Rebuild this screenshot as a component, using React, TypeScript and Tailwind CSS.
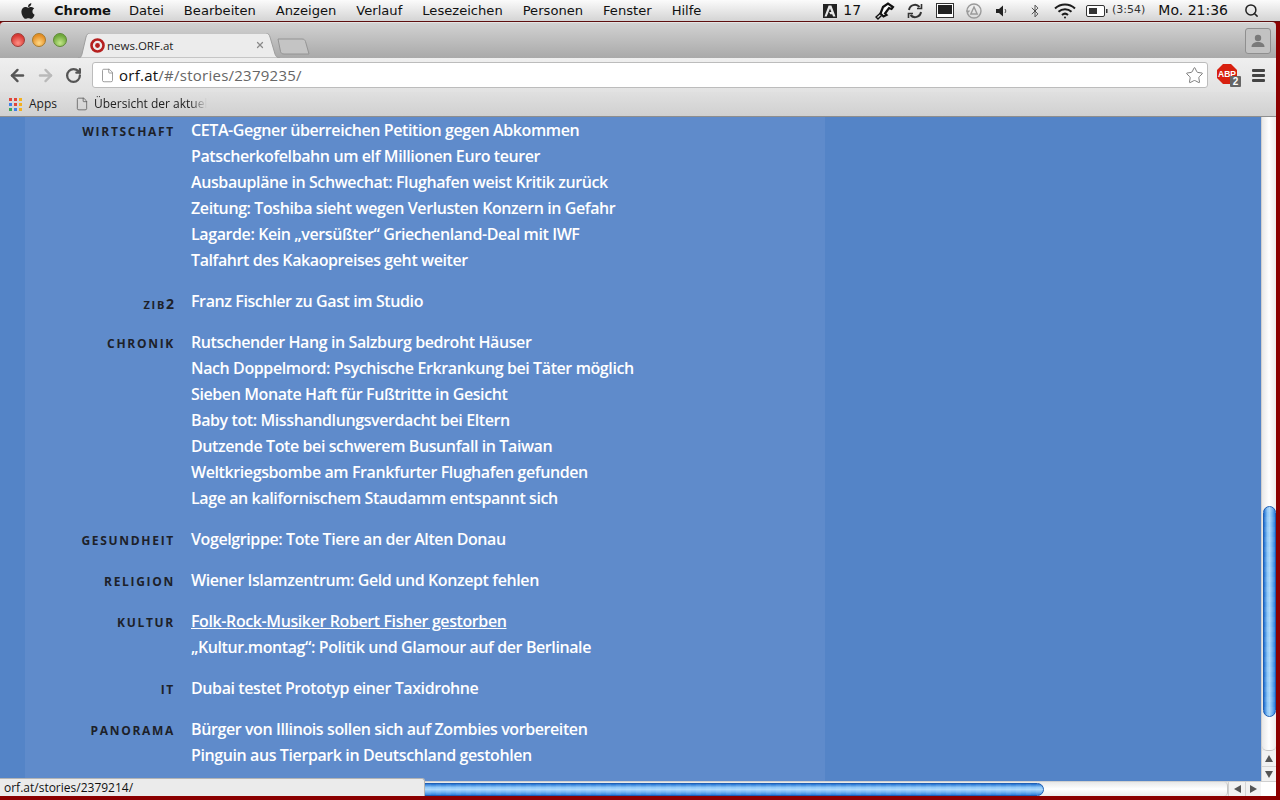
import { ArrowLeft, ArrowRight, Bluetooth, File, RotateCw, Search, Star, X } from 'lucide-react'
import { FaApple } from 'react-icons/fa'

interface NewsGroup {
  label: string
  items: string[]
}

const groups: NewsGroup[] = [
  {
    label: 'WIRTSCHAFT',
    items: [
      'CETA-Gegner überreichen Petition gegen Abkommen',
      'Patscherkofelbahn um elf Millionen Euro teurer',
      'Ausbaupläne in Schwechat: Flughafen weist Kritik zurück',
      'Zeitung: Toshiba sieht wegen Verlusten Konzern in Gefahr',
      'Lagarde: Kein „versüßter“ Griechenland-Deal mit IWF',
      'Talfahrt des Kakaopreises geht weiter',
    ],
  },
  { label: 'ZIB2', items: ['Franz Fischler zu Gast im Studio'] },
  {
    label: 'CHRONIK',
    items: [
      'Rutschender Hang in Salzburg bedroht Häuser',
      'Nach Doppelmord: Psychische Erkrankung bei Täter möglich',
      'Sieben Monate Haft für Fußtritte in Gesicht',
      'Baby tot: Misshandlungsverdacht bei Eltern',
      'Dutzende Tote bei schwerem Busunfall in Taiwan',
      'Weltkriegsbombe am Frankfurter Flughafen gefunden',
      'Lage an kalifornischem Staudamm entspannt sich',
    ],
  },
  { label: 'GESUNDHEIT', items: ['Vogelgrippe: Tote Tiere an der Alten Donau'] },
  { label: 'RELIGION', items: ['Wiener Islamzentrum: Geld und Konzept fehlen'] },
  {
    label: 'KULTUR',
    items: ['Folk-Rock-Musiker Robert Fisher gestorben', '„Kultur.montag“: Politik und Glamour auf der Berlinale'],
  },
  { label: 'IT', items: ['Dubai testet Prototyp einer Taxidrohne'] },
  {
    label: 'PANORAMA',
    items: ['Bürger von Illinois sollen sich auf Zombies vorbereiten', 'Pinguin aus Tierpark in Deutschland gestohlen'],
  },
]

const menuItems = ['Datei', 'Bearbeiten', 'Anzeigen', 'Verlauf', 'Lesezeichen', 'Personen', 'Fenster', 'Hilfe']

const appsColors = [
  'bg-[#e0453a]', 'bg-[#e0453a]', 'bg-[#f2b01e]',
  'bg-[#3f7fe6]', 'bg-[#e0453a]', 'bg-[#f2b01e]',
  'bg-[#3aa757]', 'bg-[#3f7fe6]', 'bg-[#f2b01e]',
]

function MenuBar() {
  return (
    <div className="flex h-[22px] items-center border-b border-[#5e0f0f] bg-gradient-to-b from-[#fbfbfb] to-[#d4d4d4] font-['DejaVu_Sans',sans-serif] text-[13.1px] text-[#111]">
      <FaApple className="ml-[19px] text-[18px] text-[#222]" />
      <span className="ml-[17px] mr-[18px] font-bold">Chrome</span>
      <div className="flex gap-[20px]">
        {menuItems.map((m) => (
          <span key={m}>{m}</span>
        ))}
      </div>
      <div className="ml-auto flex items-center">
        <svg width="14" height="14" viewBox="0 0 14 14">
          <rect width="14" height="14" fill="#222" />
          <path d="M5.600 1.500 1.500 12.500h2.200L7 4.500 8.400 8H6.200l1 2.200h2l.9 2.300h2.400L8.400 1.500z" fill="#e8e8e8" />
        </svg>
        <span className="ml-[6px] text-[14px]">17</span>
        <svg className="ml-[14px]" width="20" height="18" viewBox="0 0 20 18" fill="none" stroke="#111" strokeWidth="2.200">
          <path d="M8 5 13 1.500l5 3.500-1.500 2-2.500-1-4 5.500 1.500 1.500-3 1.500-3-3z" fill="#fff" />
          <path d="M5.500 11 1 15l2 2 3.500-3.500" strokeWidth="1.400" />
        </svg>
        <svg className="ml-[12px]" width="16" height="16" viewBox="0 0 16 16" fill="none" stroke="#333" strokeWidth="2">
          <path d="M2 7a6 6 0 0 1 10.500-3" />
          <path d="M14 9a6 6 0 0 1-10.500 3" />
          <path d="M14.500 1v4.500H10" strokeWidth="1.600" />
          <path d="M1.500 15v-4.500H6" strokeWidth="1.600" />
        </svg>
        <svg className="ml-[13px]" width="18" height="15" viewBox="0 0 18 15">
          <rect x="0.500" y="0.500" width="17" height="14" fill="#fff" stroke="#333" />
          <rect x="2" y="2" width="14" height="9" fill="#222" />
        </svg>
        <svg className="ml-[12px]" width="16" height="16" viewBox="0 0 16 16" fill="none" stroke="#9a9a9a" strokeWidth="1.400">
          <circle cx="8" cy="8" r="7" />
          <path d="M8 4 4.800 11h6.400z" />
          <path d="M0.500 7.500 2 9l1.500-1.500" />
        </svg>
        <svg className="ml-[14px]" width="11" height="12" viewBox="0 0 11 12">
          <path d="M0 4h3l4-3.500v11L3 8H0z" fill="#222" />
          <path d="M9 4a3 3 0 0 1 0 4" fill="none" stroke="#555" />
        </svg>
        <Bluetooth className="ml-[21px] text-[#333]" size={14} strokeWidth={1.4} />
        <svg className="ml-[12px]" width="22" height="16" viewBox="0 0 22 16" fill="none" stroke="#1c1c1c" strokeWidth="2">
          <path d="M1 5.500a14.500 14.500 0 0 1 20 0" />
          <path d="M4.500 8.800a9.500 9.500 0 0 1 13 0" />
          <path d="M8 12a4.500 4.500 0 0 1 6 0" />
          <circle cx="11" cy="14.500" r="1" fill="#1c1c1c" stroke="none" />
        </svg>
        <svg className="ml-[10px]" width="22" height="12" viewBox="0 0 22 12">
          <rect x="0.500" y="0.500" width="18" height="11" rx="1.500" fill="#fff" stroke="#333" />
          <rect x="3" y="3" width="8" height="6" fill="#333" />
          <rect x="20" y="4" width="1.500" height="4" fill="#333" />
        </svg>
        <span className="ml-[4px] text-[11px] text-[#333]">(3:54)</span>
        <span className="ml-[13px] text-[14px]">Mo. 21:36</span>
        <Search className="ml-[16px] mr-[21px] text-[#222]" size={15} strokeWidth={2.4} />
      </div>
    </div>
  )
}

function TabStrip() {
  return (
    <div className="flex h-[36px] items-end rounded-t-[4px] border-t border-[#e4e4e4] bg-gradient-to-b from-[#d2d2d2] to-[#a9a9a9] pl-[11px]">
      <div className="mb-[11px] flex gap-[7px] self-end">
        <span className="h-[14px] w-[14px] rounded-full border border-[#9c3a36] bg-[radial-gradient(circle_at_50%_75%,#ff8f84,#d83a35_70%)]" />
        <span className="h-[14px] w-[14px] rounded-full border border-[#a87a2a] bg-[radial-gradient(circle_at_50%_75%,#ffd885,#e58f26_70%)]" />
        <span className="h-[14px] w-[14px] rounded-full border border-[#5e8a35] bg-[radial-gradient(circle_at_50%_75%,#c4e78a,#6fa93c_70%)]" />
      </div>
      <div className="relative ml-[11px] flex h-[25px] w-[202px] items-center pl-[12px]">
        <svg className="absolute inset-0" width="202" height="25" viewBox="0 0 202 25">
          <path d="M0 25c3 0 3.500-2 4-4l4-17c.5-2 2-4 4-4h176c2 0 3.500 2 4 4l5 17c.5 2 2 4 5 4z" fill="#ececec" stroke="#9e9e9e" />
        </svg>
        <svg className="relative" width="15" height="15" viewBox="0 0 15 15">
          <circle cx="7.500" cy="7.500" r="6" fill="none" stroke="#b5201f" strokeWidth="2.600" />
          <circle cx="7.500" cy="7.500" r="2.400" fill="#b5201f" />
        </svg>
        <span className="relative ml-[2px] font-['Open_Sans',sans-serif] text-[11.5px] text-[#222]">news.ORF.at</span>
        <X className="absolute left-[177px] top-[7px] text-[#8a8a8a]" size={10} strokeWidth={3} />
      </div>
      <svg className="mb-[3px] -ml-[3px]" width="33" height="17" viewBox="0 0 33 17">
        <path d="M1 1h24c2 0 3 1 3.500 2.500L32 16H7c-2 0-3-1-3.500-2.500z" fill="#c4c4c4" stroke="#949494" />
      </svg>
      <div className="mb-[4px] ml-auto mr-[5px] flex h-[26px] w-[26px] items-center justify-center self-end rounded-[3px] border border-[#8f8f8f] bg-[#c2c2c2]">
        <svg width="14" height="14" viewBox="0 0 14 14" fill="#7a7a7a">
          <circle cx="7" cy="4" r="3.200" />
          <path d="M0.500 13c0-3.500 3-5 6.500-5s6.500 1.500 6.500 5z" />
        </svg>
      </div>
    </div>
  )
}

function Toolbar() {
  return (
    <div className="flex h-[34px] items-center bg-gradient-to-b from-[#efefef] to-[#e2e2e2] pl-[8px]">
      <ArrowLeft className="text-[#555]" size={19} strokeWidth={3} />
      <ArrowRight className="ml-[9px] text-[#b9b9b9]" size={19} strokeWidth={3} />
      <RotateCw className="ml-[10px] text-[#555]" size={17} strokeWidth={3.2} />
      <div className="ml-[10px] flex h-[26px] w-[1116px] items-center rounded-[3px] border border-[#bcbcbc] bg-white pl-[7px] pr-[3px]">
        <File className="text-[#888]" size={15} strokeWidth={1.3} />
        <span className="ml-[4px] font-['Open_Sans',sans-serif] text-[15px] tracking-[0.25px] text-[#666]">
          <span className="text-[#111]">orf.at</span>/#/stories/2379235/
        </span>
        <Star className="ml-auto text-[#777]" size={19} strokeWidth={1.2} />
      </div>
      <div className="relative ml-[9px] h-[24px] w-[26px]">
        <span className="absolute left-0 top-[1px] flex h-[20px] w-[20px] items-center justify-center bg-[#d8200f] font-['Liberation_Sans',sans-serif] text-[8.5px] font-bold text-white [clip-path:polygon(30%_0,70%_0,100%_30%,100%_70%,70%_100%,30%_100%,0_70%,0_30%)]">
          ABP
        </span>
        <span className="absolute left-[13px] top-[13px] flex h-[11px] w-[11px] items-center justify-center rounded-[1px] bg-[#666] font-['Liberation_Sans',sans-serif] text-[10px] font-bold text-white">
          2
        </span>
      </div>
      <div className="ml-[9px] flex flex-col gap-[2px]">
        <span className="h-[3px] w-[13px] rounded-[1px] bg-[#444]" />
        <span className="h-[3px] w-[13px] rounded-[1px] bg-[#444]" />
        <span className="h-[3px] w-[13px] rounded-[1px] bg-[#444]" />
      </div>
    </div>
  )
}

function BookmarksBar() {
  return (
    <div className="flex h-[25px] items-center border-b border-[#8e8e8e] bg-gradient-to-b from-[#e0e0e0] to-[#d0d0d0] pl-[9px] font-['Open_Sans',sans-serif] text-[12px] text-[#222]">
      <div className="grid grid-cols-3 gap-[2px]">
        {appsColors.map((c, i) => (
          <span key={i} className={`h-[3px] w-[3px] ${c}`} />
        ))}
      </div>
      <span className="ml-[7px]">Apps</span>
      <File className="ml-[18px] text-[#555]" size={14} strokeWidth={1.3} />
      <span className="ml-[5px] whitespace-nowrap [mask-image:linear-gradient(to_right,black_85%,transparent)]">
        Übersicht der aktuel
      </span>
    </div>
  )
}

function NewsList() {
  return (
    <div className="flex flex-1 bg-[#5484c7]">
      <div className="w-[25px]" />
      <div className="flex h-[664px] w-[800px] flex-col gap-[15px] overflow-hidden bg-[#5f8bcb] font-['Open_Sans',sans-serif]">
        {groups.map((g) => (
          <div key={g.label} className="flex">
            <div className="flex h-[26px] w-[149px] items-center justify-end pt-[4px] text-[12px] font-bold tracking-[1.7px] text-[#1d2129]">
              {g.label === 'ZIB2' ? (
                <span className="text-[11px]">
                  ZIB<span className="text-[14px] tracking-normal">2</span>
                </span>
              ) : (
                <span className="-mr-[1px]">{g.label}</span>
              )}
            </div>
            <div className="ml-[17px] flex flex-col">
              {g.items.map((t) => (
                <div
                  key={t}
                  className={`h-[26px] text-[16px] leading-[26px] font-semibold tracking-[-0.4px] text-white ${t.startsWith('Folk') ? 'underline' : ''}`}
                >
                  {t}
                </div>
              ))}
            </div>
          </div>
        ))}
      </div>
      <div className="flex-1" />
    </div>
  )
}

function VerticalScrollbar() {
  return (
    <div className="flex w-[15px] flex-col border-l border-[#d0d0d0] bg-gradient-to-r from-[#e8e8e8] via-white to-[#ececec]">
      <div className="h-[389px]" />
      <div className="ml-px h-[211px] w-[13px] rounded-[7px] border border-[#1f5fb4] bg-[repeating-linear-gradient(to_bottom,rgba(255,255,255,0.05)_0_5px,transparent_5px_10px),linear-gradient(to_right,#1f6fd0,#8cc6f8_30%,#a8d6fb_50%,#6fb2f0_75%,#2f7fdc)]" />
      <div className="h-[29px]" />
      <div className="h-[5px] rounded-b-[7px] border-b border-[#c4c4c4]" />
      <div className="flex h-[16px] items-center justify-center border-b border-[#d4d4d4] bg-[#f2f2f2]">
        <span className="h-0 w-0 border-x-[4px] border-b-[7px] border-x-transparent border-b-[#555]" />
      </div>
      <div className="flex h-[14px] items-center justify-center bg-[#f2f2f2]">
        <span className="h-0 w-0 border-x-[4px] border-t-[7px] border-x-transparent border-t-[#555]" />
      </div>
    </div>
  )
}

function HorizontalScrollbar() {
  return (
    <div className="flex h-[15px] items-center border-t border-[#d0d0d0] bg-gradient-to-b from-[#e8e8e8] via-white to-[#ececec]">
      <div className="ml-[415px] h-[13px] w-[631px] rounded-[7px] border border-[#1f5fb4] bg-[repeating-linear-gradient(to_right,rgba(255,255,255,0.05)_0_5px,transparent_5px_10px),linear-gradient(to_bottom,#1f6fd0,#8cc6f8_30%,#a8d6fb_50%,#6fb2f0_75%,#2f7fdc)]" />
      <div className="ml-[180px] h-full w-[4px] rounded-r-[7px] border-r border-[#c4c4c4]" />
      <div className="ml-auto flex h-full w-[33px] items-center justify-center border-l border-[#cfcfcf] bg-[#f2f2f2]">
        <span className="h-0 w-0 border-y-[4px] border-r-[7px] border-y-transparent border-r-[#555]" />
        <span className="mx-[4px] h-full w-px bg-[#d4d4d4]" />
        <span className="h-0 w-0 border-y-[4px] border-l-[7px] border-y-transparent border-l-[#555]" />
      </div>
      <div className="h-full w-[15px] bg-white" />
    </div>
  )
}

export default function App() {
  return (
    <div className="relative flex h-[800px] w-[1280px] flex-col overflow-hidden bg-[#8b0000]">
      <MenuBar />
      <div className="mr-[4px] mb-[4px] flex flex-1 flex-col">
        <TabStrip />
        <Toolbar />
        <BookmarksBar />
        <div className="flex flex-1">
          <NewsList />
          <VerticalScrollbar />
        </div>
        <HorizontalScrollbar />
      </div>
      <div className="absolute bottom-[4px] left-0 h-[18px] w-[425px] rounded-tr-[3px] border-t border-r border-[#b4b4b4] bg-[#ebebeb] pl-[4px] font-['Open_Sans',sans-serif] text-[12px] leading-[17px] text-[#111]">
        orf.at/stories/2379214/
      </div>
    </div>
  )
}
